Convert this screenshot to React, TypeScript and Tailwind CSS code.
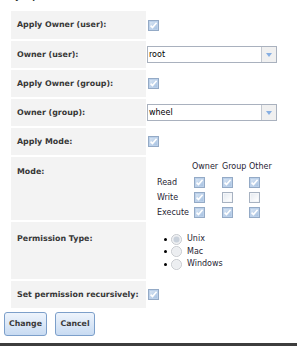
import React from "react";

function Check({ checked = true }: { checked?: boolean }) {
  return (
    <svg width="11" height="11" viewBox="0 0 11 11" className="block shrink-0">
      <defs>
        <linearGradient id={checked ? "cbOn" : "cbOff"} x1="0" y1="0" x2="1" y2="1">
          {checked ? (
            <>
              <stop offset="0" stopColor="#d7e4f3" />
              <stop offset="1" stopColor="#a9c3e2" />
            </>
          ) : (
            <>
              <stop offset="0" stopColor="#e6ebf1" />
              <stop offset="1" stopColor="#ffffff" />
            </>
          )}
        </linearGradient>
      </defs>
      <rect x="0.5" y="0.5" width="10" height="10" fill={checked ? "#bcd1ea" : "#f4f6f9"} stroke={checked ? "#94aac6" : "#a7b2c1"} />
      <rect x="2" y="2" width="7" height="7" fill={`url(#${checked ? "cbOn" : "cbOff"})`} />
      {checked && <path d="M2.6 5.6 L4.5 7.6 L8.6 2.8" fill="none" stroke="#ffffff" strokeWidth="1.6" />}
    </svg>
  );
}

function Radio({ checked = false }: { checked?: boolean }) {
  return (
    <svg width="11" height="11" viewBox="0 0 11 11" className="block shrink-0">
      <circle cx="5.5" cy="5.5" r="5" fill="#f3f4f6" stroke="#c6c9ce" />
      <circle cx="5.5" cy="5.5" r="3.8" fill="#eceef1" />
      {checked && <circle cx="5.5" cy="5.5" r="3" fill="#c9d1db" />}
    </svg>
  );
}

function Select({ value }: { value: string }) {
  return (
    <div className="w-[130px] h-[17px] border border-[#a9b1be] bg-white flex">
      <div className="flex-1 pl-[1px] text-[8px] leading-[15px] text-black">{value}</div>
      <div className="w-[15px] h-full border-l border-[#c3c8d0] bg-[#f0f0f0] flex items-center justify-center">
        <svg width="6" height="4" viewBox="0 0 6 4" className="block">
          <path d="M0 0 H6 L3 4 Z" fill="#86aee2" />
        </svg>
      </div>
    </div>
  );
}

function Row({ label, h, children, top, align = "center", vtop }: { label: string; h: string; children?: React.ReactNode; top?: string; align?: "center" | "start"; vtop?: string }) {
  return (
    <div className={`flex ${h}`}>
      <div className={`w-[135px] bg-[#f3f3f3] pl-[6px] flex ${align === "center" ? "items-center" : "items-start"} ${top ?? ""}`}>
        <span className="text-[7.9px] leading-[10px] font-bold text-[#383838] whitespace-nowrap">{label}</span>
      </div>
      <div className={`flex-1 flex ${vtop ? "items-start " + vtop : "items-center"}`}>{children}</div>
    </div>
  );
}

export default function App() {
  return (
    <div className="w-[297px] h-[346px] bg-white flex flex-col font-['DejaVu_Sans',sans-serif]">
      <div className="h-[3px] overflow-hidden pl-[15px]">
        <div className="-mt-[8px] text-[8px] leading-[10px] font-bold text-[#333] flex">
          <span>y</span>
          <span className="ml-[12px]">p</span>
        </div>
      </div>
      <div className="pl-[11px] pt-[8px] flex flex-col gap-[2px]">
        <Row label="Apply Owner (user):" h="h-[28px]">
          <div className="pl-[2px]"><Check /></div>
        </Row>
        <Row label="Owner (user):" h="h-[27px]">
          <div className="pl-[1px]"><Select value="root" /></div>
        </Row>
        <Row label="Apply Owner (group):" h="h-[27px]">
          <div className="pl-[2px]"><Check /></div>
        </Row>
        <Row label="Owner (group):" h="h-[27px]">
          <div className="pl-[1px]"><Select value="wheel" /></div>
        </Row>
        <Row label="Apply Mode:" h="h-[27px]">
          <div className="pl-[2px]"><Check /></div>
        </Row>
        <Row label="Mode:" h="h-[63px]" align="start" top="pt-[10px]" vtop="pt-[5px]">
          <div className="ml-[11px] flex flex-col text-[8px] text-[#1f2433]">
            <div className="h-[13px] leading-[10px] flex">
              <div className="w-[35px]" />
              <div className="w-[28px]">Owner</div>
              <div className="w-[27px] pl-[2px]">Group</div>
              <div className="pl-[2px]">Other</div>
            </div>
            {[
              ["Read", true, true, true],
              ["Write", true, false, false],
              ["Execute", true, true, true],
            ].map(([name, a, b, c]) => (
              <div key={name as string} className="h-[15px] flex items-center">
                <div className="w-[35px] leading-[10px]">{name as string}</div>
                <div className="w-[28px] pl-[2px]"><Check checked={a as boolean} /></div>
                <div className="w-[27px] pl-[2px]"><Check checked={b as boolean} /></div>
                <div className="pl-[2px]"><Check checked={c as boolean} /></div>
              </div>
            ))}
          </div>
        </Row>
        <Row label="Permission Type:" h="h-[57px]" align="start" top="pt-[12px]" vtop="pt-[11px]">
          <div className="ml-[18px] flex flex-col text-[8px] text-[#1f2433]">
            {[
              ["Unix", true],
              ["Mac", false],
              ["Windows", false],
            ].map(([name, on]) => (
              <div key={name as string} className="h-[12.5px] flex items-center">
                <span className="w-[3px] h-[3px] rounded-full bg-black" />
                <span className="ml-[4px]"><Radio checked={on as boolean} /></span>
                <span className="ml-[5px] leading-[10px]">{name as string}</span>
              </div>
            ))}
          </div>
        </Row>
        <Row label="Set permission recursively:" h="h-[27px]">
          <div className="pl-[2px]"><Check /></div>
        </Row>
      </div>
      <div className="pl-[4px] mt-[4px] flex gap-[8px]">
        <button className="w-[43px] h-[24px] rounded-[3px] border border-[#7c9fca] bg-gradient-to-b from-[#eef4fc] to-[#c8dbf2] text-[7.8px] font-bold text-[#3a3a3a]">
          Change
        </button>
        <button className="w-[40px] h-[24px] rounded-[3px] border border-[#7c9fca] bg-gradient-to-b from-[#eef4fc] to-[#c8dbf2] text-[7.8px] font-bold text-[#3a3a3a]">
          Cancel
        </button>
      </div>
      <div className="flex-1" />
      <div className="h-[3px] bg-[#3d3d3d]" />
    </div>
  );
}
